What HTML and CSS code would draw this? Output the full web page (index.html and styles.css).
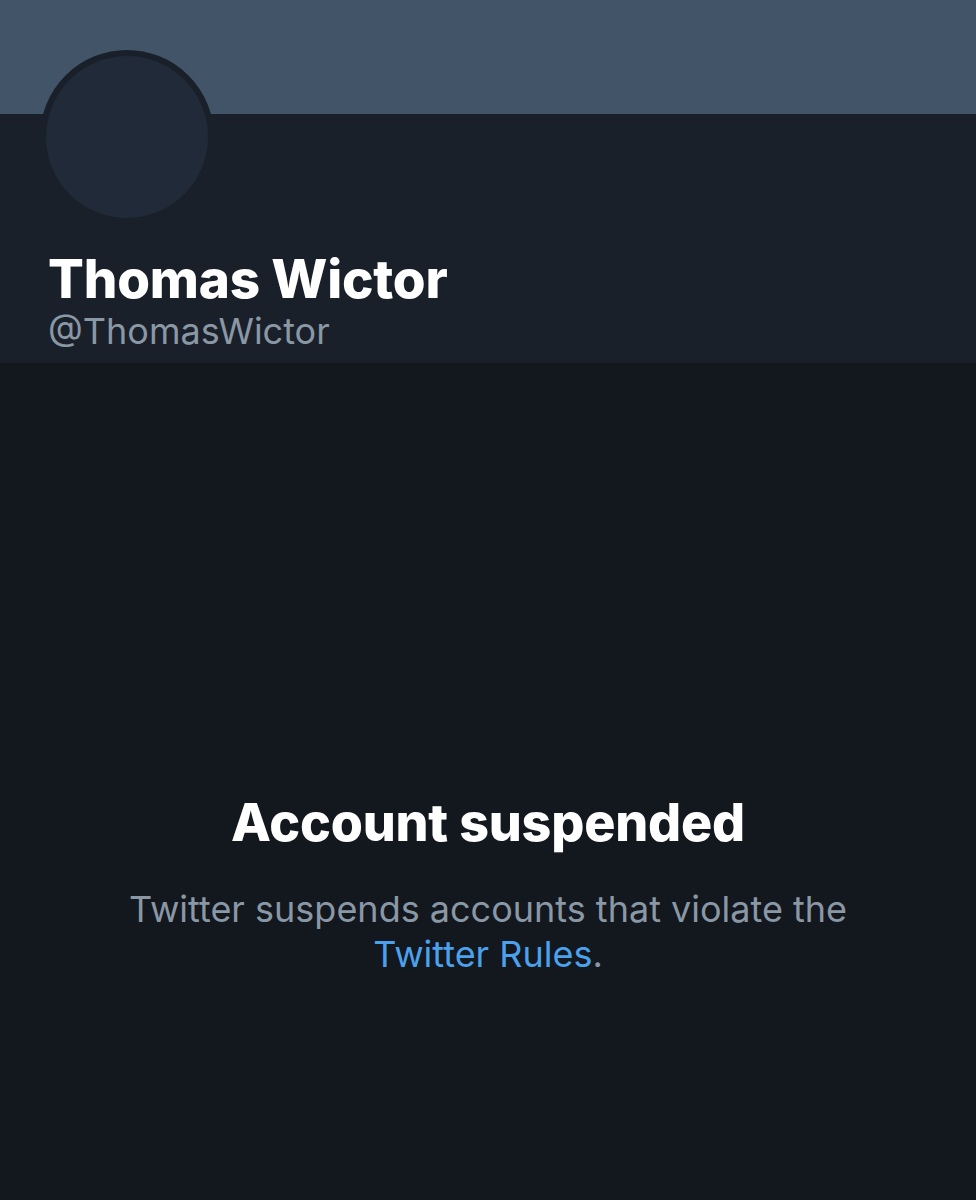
FILE: index.html
```html
<!DOCTYPE html>
<html>
<head>
<meta charset="utf-8">
<link rel="stylesheet" href="styles.css">
</head>
<body>
<div class="page">
  <div class="banner"></div>
  <div class="profile">
    <div class="avatar"></div>
    <div class="name">Thomas Wictor</div>
    <div class="handle">@ThomasWictor</div>
  </div>
  <div class="content">
    <div class="title">Account suspended</div>
    <div class="desc">Twitter suspends accounts that violate the<br><span class="link">Twitter Rules</span>.</div>
  </div>
</div>
</body>
</html>
```
FILE: styles.css
```css
html, body {
  margin: 0;
  padding: 0;
  background: #13171e;
}
.page {
  width: 976px;
  height: 1200px;
  display: flex;
  flex-direction: column;
  font-family: Inter, "Liberation Sans", sans-serif;
  background: #13171e;
}
.banner {
  height: 114px;
  background: #425467;
}
.profile {
  height: 249px;
  background: #1a2029;
  position: relative;
  padding-left: 48px;
  box-sizing: border-box;
  padding-top: 133px;
}
.avatar {
  position: absolute;
  left: 40px;
  top: -64px;
  width: 162px;
  height: 162px;
  border-radius: 50%;
  background: #202a38;
  border: 6px solid #1a2029;
}
.name {
  color: #ffffff;
  font-weight: 800;
  font-size: 53px;
  line-height: 64px;
  letter-spacing: -0.2px;
}
.handle {
  color: #8a97a5;
  font-size: 36px;
  line-height: 44px;
  margin-top: -2px;
}
.content {
  flex: 1;
  display: flex;
  flex-direction: column;
  align-items: center;
  text-align: center;
  padding-top: 428px;
}
.title {
  color: #ffffff;
  font-weight: 800;
  font-size: 52px;
  line-height: 64px;
  letter-spacing: -0.2px;
}
.desc {
  margin-top: 32px;
  color: #8a97a5;
  font-size: 36px;
  line-height: 45px;
}
.link {
  color: #4ca1ec;
}
```
